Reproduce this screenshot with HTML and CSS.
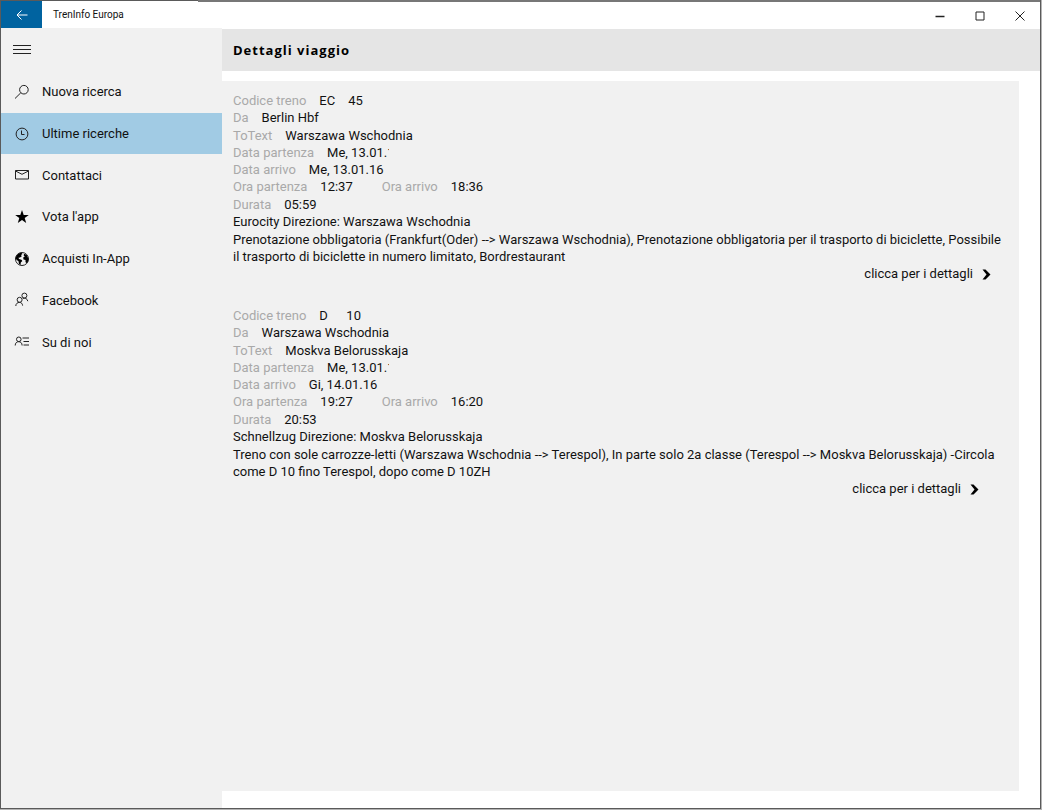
FILE: index.html
```html
<!DOCTYPE html>
<html lang="it">
<head>
  <meta charset="UTF-8" />
  <meta name="viewport" content="width=device-width, initial-scale=1.0" />
  <title>TrenInfo Europa</title>
  <link rel="stylesheet" href="styles.css">
</head>
<body>
  <div class="window">
    <header class="titlebar">
      <div class="brand">
        <button class="back" aria-label="Indietro">
          <svg width="12" height="12" viewBox="0 0 12 12"><path d="M11.5 6H1M5.5 1.5L1 6l4.500 4.500" /></svg>
        </button>
        <span class="app-name">TrenInfo Europa</span>
      </div>
      <div class="controls">
        <button class="control" aria-label="Riduci a icona">
          <svg width="10" height="10" viewBox="0 0 10 10"><path class="thick" d="M0.500 5.500h9" /></svg>
        </button>
        <button class="control" aria-label="Ingrandisci">
          <svg width="10" height="10" viewBox="0 0 10 10"><path d="M1 1h8v8H1z" /></svg>
        </button>
        <button class="control" aria-label="Chiudi">
          <svg width="10" height="10" viewBox="0 0 10 10"><path d="M0.500 0.500l9 9M9.500 0.500l-9 9" /></svg>
        </button>
      </div>
    </header>

    <div class="body">
      <aside class="sidebar">
        <button class="menu-btn" aria-label="Menu">
          <svg width="18" height="11" viewBox="0 0 18 11"><path d="M0 1.500h18M0 5.500h18M0 9.500h18" /></svg>
        </button>
        <nav class="nav">
          <a class="nav-item" href="#">
            <svg width="16" height="16" viewBox="0 0 16 16"><circle cx="9.900" cy="5.700" r="4.300" /><path d="M6.800 8.800L1 14.500" /></svg>
            Nuova ricerca
          </a>
          <a class="nav-item active" href="#">
            <svg width="16" height="16" viewBox="0 0 16 16"><circle cx="8" cy="8" r="5.900" /><path d="M7.500 4.500v4h3" /></svg>
            Ultime ricerche
          </a>
          <a class="nav-item" href="#">
            <svg width="16" height="16" viewBox="0 0 16 16"><path d="M1.500 3.500h13v8.500h-13zM1.500 4L8 7.300 14.500 4" /></svg>
            Contattaci
          </a>
          <a class="nav-item" href="#">
            <svg width="16" height="16" viewBox="0 0 16 16"><path class="solid" d="M8 1l1.700 4.900h5.100l-4.100 3.100 1.500 5L8 11l-4.200 3 1.500-5L1.200 5.900h5.100z" /></svg>
            Vota l'app
          </a>
          <a class="nav-item" href="#">
            <svg width="16" height="16" viewBox="0 0 16 16"><circle cx="8" cy="8" r="6.500" /><path class="solid" d="M1.500 7.500C2 4.300 4.500 1.800 7.500 1.700L8.500 3 7 4 7.800 5.300 6 6.500 4.500 6.700 5 8 7.500 8.800 8.300 10 6.800 11.500 6.500 14 5 13 4.500 10.300 2.800 9zM10.200 2.700L12.800 4 14.500 8 14 10.500 12.500 12.300 11.500 11 11.500 9 9.500 8.500 9.200 6.500 10.800 5.500 9.600 4.300z" /></svg>
            Acquisti In-App
          </a>
          <a class="nav-item" href="#">
            <svg width="16" height="16" viewBox="0 0 16 16"><circle cx="5.600" cy="7.800" r="2.500" /><path d="M1.800 14c0-2.200 1.600-3.600 3.600-3.600s3 1.200 3.200 3.200" /><circle cx="10.400" cy="3.600" r="2.500" /><path d="M8.800 6.500c2-1 4.500 0 5 2.700" /></svg>
            Facebook
          </a>
          <a class="nav-item" href="#">
            <svg width="16" height="16" viewBox="0 0 16 16"><circle cx="4.800" cy="5.300" r="2.300" /><path d="M1.200 11.500c0-2.500 1.500-3.800 3.500-3.800s3.400 1.300 3.400 3.800M8.500 4H15M9.500 7.500H15M9.500 11H15" /></svg>
            Su di noi
          </a>
        </nav>
      </aside>

      <main class="main">
        <h1 class="page-title">Dettagli viaggio</h1>
        <div class="trips">
          <section class="trip">
            <dl class="fields">
              <div class="row"><dt>Codice treno</dt><dd>EC</dd><dd>45</dd></div>
              <div class="row"><dt>Da</dt><dd>Berlin Hbf</dd></div>
              <div class="row"><dt>ToText</dt><dd>Warszawa Wschodnia</dd></div>
              <div class="row"><dt>Data partenza</dt><dd class="clip">Me, 13.01.16</dd></div>
              <div class="row"><dt>Data arrivo</dt><dd>Me, 13.01.16</dd></div>
              <div class="row"><dt>Ora partenza</dt><dd class="time">12:37</dd><dt>Ora arrivo</dt><dd>18:36</dd></div>
              <div class="row"><dt>Durata</dt><dd>05:59</dd></div>
            </dl>
            <h2 class="direction">Eurocity Direzione: Warszawa Wschodnia</h2>
            <p class="notes">Prenotazione obbligatoria (Frankfurt(Oder) --&gt; Warszawa Wschodnia), Prenotazione obbligatoria per il trasporto di biciclette, Possibile il trasporto di biciclette in numero limitato, Bordrestaurant</p>
            <a class="details" href="#">clicca per i dettagli
              <svg width="9" height="11" viewBox="0 0 9 11"><path class="solid" d="M0.500 0.500h3L8.500 5.500l-5 5h-3l4-5z" /></svg>
            </a>
          </section>

          <section class="trip narrow">
            <dl class="fields">
              <div class="row"><dt>Codice treno</dt><dd class="code">D</dd><dd>10</dd></div>
              <div class="row"><dt>Da</dt><dd>Warszawa Wschodnia</dd></div>
              <div class="row"><dt>ToText</dt><dd>Moskva Belorusskaja</dd></div>
              <div class="row"><dt>Data partenza</dt><dd class="clip">Me, 13.01.16</dd></div>
              <div class="row"><dt>Data arrivo</dt><dd>Gi, 14.01.16</dd></div>
              <div class="row"><dt>Ora partenza</dt><dd class="time">19:27</dd><dt>Ora arrivo</dt><dd>16:20</dd></div>
              <div class="row"><dt>Durata</dt><dd>20:53</dd></div>
            </dl>
            <h2 class="direction">Schnellzug Direzione: Moskva Belorusskaja</h2>
            <p class="notes">Treno con sole carrozze-letti (Warszawa Wschodnia --&gt; Terespol), In parte solo 2a classe (Terespol --&gt; Moskva Belorusskaja) <span class="keep">-Circola</span> come D 10 fino Terespol, dopo come D 10ZH</p>
            <a class="details" href="#">clicca per i dettagli
              <svg width="9" height="11" viewBox="0 0 9 11"><path class="solid" d="M0.500 0.500h3L8.500 5.500l-5 5h-3l4-5z" /></svg>
            </a>
          </section>
        </div>
      </main>
    </div>
  </div>
</body>
</html>
```

FILE: styles.css
```css
* {
  box-sizing: border-box;
}
body {
  margin: 0;
  padding: 0 1px 1px 0;
  height: 100vh;
  background-color: #b4b4b4;
  font-family: Roboto, "Open Sans", sans-serif;
  font-size: 13px;
  line-height: 17px;
  color: #111;
}
button {
  border: none;
  padding: 0;
  background: none;
  display: flex;
  align-items: center;
  justify-content: center;
}
a {
  color: inherit;
  text-decoration: none;
}
svg {
  fill: none;
  stroke: #222;
  flex: none;
}
.window {
  min-height: 100%;
  display: flex;
  flex-direction: column;
  background-color: #fff;
  border: 1px solid #5a5a5a;
  border-top: none;
}
.titlebar {
  display: flex;
  height: 29px;
}
.brand {
  display: flex;
  align-items: center;
  width: 197px;
  height: 28px;
  border-top: 1px solid #5a5a5a;
}
.back {
  width: 41px;
  height: 27px;
  background-color: #0063a0;
}
.back svg {
  stroke: #fff;
}
.app-name {
  margin-left: 11px;
  font-size: 10px;
}
.controls {
  flex: 1;
  display: flex;
  justify-content: flex-end;
  border-top: 2px solid #777;
}
.control {
  width: 40px;
}
.thick {
  stroke-width: 1.500;
}
.body {
  flex: 1;
  display: flex;
}
.sidebar {
  width: 221px;
  margin-top: -1px;
  background-color: #f1f1f1;
}
.menu-btn {
  width: 41px;
  height: 43px;
}
.nav {
  display: grid;
  grid-auto-rows: 1fr;
  height: 292px;
}
.nav-item {
  display: flex;
  align-items: center;
  gap: 12px;
  padding-left: 13px;
}
.nav-item.active {
  background-color: #a1cbe4;
}
.solid {
  fill: #000;
  stroke: none;
}
.main {
  flex: 1;
  display: flex;
  flex-direction: column;
}
.page-title {
  margin: 0;
  padding: 12px 11px;
  background-color: #e5e5e5;
  font-family: "Open Sans", sans-serif;
  font-size: 13px;
  line-height: 18px;
  letter-spacing: 1px;
  color: #000;
}
.trips {
  flex: 1;
  margin: 10px 21px 17px 0;
  padding: 11px 11px;
  background-color: #f1f1f1;
}
.trip {
  display: flex;
  flex-direction: column;
  margin-bottom: 24px;
}
.fields {
  display: grid;
  grid-auto-rows: 1fr;
  height: 121px;
  margin: 0;
}
.row {
  display: flex;
  gap: 13px;
}
dt {
  color: #a9a9a9;
}
dd {
  margin: 0;
}
.code {
  width: 14px;
}
.clip {
  width: 62px;
  overflow: hidden;
  white-space: nowrap;
}
.time {
  margin-right: 16px;
}
.direction {
  margin: 0;
  font-size: 13px;
  font-weight: normal;
  line-height: 18px;
}
.notes {
  margin: 0;
}
.keep {
  white-space: nowrap;
}
.details {
  align-self: flex-end;
  display: flex;
  align-items: center;
  gap: 9px;
  margin-right: 17px;
  line-height: 18px;
}
.narrow .details {
  margin-right: 29px;
}
```
